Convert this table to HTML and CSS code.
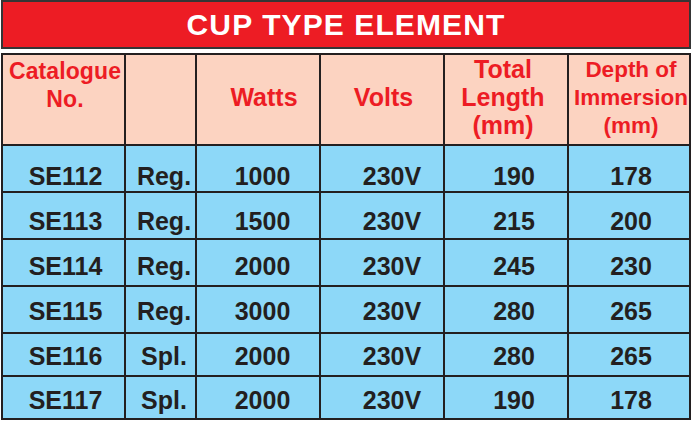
FILE: index.html
```html
<!DOCTYPE html>
<html lang="en">
<head>
<meta charset="utf-8">
<title>Cup Type Element</title>
<link rel="stylesheet" href="styles.css">
</head>
<body>
<div class="page">
  <h1 class="title">CUP TYPE ELEMENT</h1>
  <div class="table">
    <div class="row head">
      <div class="cell c1"><span class="narrow1">Catalogue<br>No.</span></div>
      <div class="cell c2"></div>
      <div class="cell c3 low">Watts</div>
      <div class="cell c4 low">Volts</div>
      <div class="cell c5">Total<br>Length<br>(mm)</div>
      <div class="cell c6"><span class="narrow6">Depth of<br>Immersion<br>(mm)</span></div>
    </div>
    <div class="row data r1">
      <div class="cell c1">SE112</div><div class="cell c2">Reg.</div><div class="cell c3">1000</div><div class="cell c4">230V</div><div class="cell c5">190</div><div class="cell c6">178</div>
    </div>
    <div class="row data r2">
      <div class="cell c1">SE113</div><div class="cell c2">Reg.</div><div class="cell c3">1500</div><div class="cell c4">230V</div><div class="cell c5">215</div><div class="cell c6">200</div>
    </div>
    <div class="row data r3">
      <div class="cell c1">SE114</div><div class="cell c2">Reg.</div><div class="cell c3">2000</div><div class="cell c4">230V</div><div class="cell c5">245</div><div class="cell c6">230</div>
    </div>
    <div class="row data r4">
      <div class="cell c1">SE115</div><div class="cell c2">Reg.</div><div class="cell c3">3000</div><div class="cell c4">230V</div><div class="cell c5">280</div><div class="cell c6">265</div>
    </div>
    <div class="row data r5">
      <div class="cell c1">SE116</div><div class="cell c2">Spl.</div><div class="cell c3">2000</div><div class="cell c4">230V</div><div class="cell c5">280</div><div class="cell c6">265</div>
    </div>
    <div class="row data r6">
      <div class="cell c1">SE117</div><div class="cell c2">Spl.</div><div class="cell c3">2000</div><div class="cell c4">230V</div><div class="cell c5">190</div><div class="cell c6">178</div>
    </div>
  </div>
</div>
</body>
</html>
```

FILE: styles.css
```css
html, body {
  margin: 0;
  padding: 0;
  background: #ffffff;
}

.page {
  width: 690px;
  margin-left: 1px;
  font-family: "Liberation Sans", Arial, sans-serif;
  font-weight: bold;
}

.title {
  box-sizing: border-box;
  height: 49px;
  margin: 0;
  background: #ed1c24;
  border: 2px solid #353535;
  color: #ffffff;
  font-size: 30px;
  line-height: 45px;
  letter-spacing: 1.1px;
  text-align: center;
}

.table {
  margin-top: 4px;
  display: grid;
  grid-template-columns: 121px 69px 122px 122px 122px 120px;
  grid-template-rows: 89px 45px 45px 45px 45px 41px 41px;
  gap: 2px;
  padding: 2px;
  background: #231f20;
}

.row {
  display: contents;
}

.cell {
  text-align: center;
  white-space: nowrap;
  overflow: hidden;
}

.head .cell {
  background: #fcd3c1;
  color: #ed1c24;
  font-size: 25px;
  line-height: 28px;
  padding-top: 0;
}

.head .c1 { font-size: 23px; padding-top: 2px; padding-left: 3px; }
.head .c3 { padding-left: 12px; }
.head .c4 { padding-left: 3px; }
.head .c5 { padding-right: 6px; }
.head .c6 { font-size: 22.5px; padding-top: 1px; padding-left: 4px; }
.head .low { padding-top: 28px; }

.narrow1 { letter-spacing: 0.1px; }
.narrow6 { letter-spacing: 0; }

.data .cell {
  background: #8dd8f8;
  color: #231f20;
  font-size: 25px;
  line-height: 28px;
}

.data .c1 { padding-left: 4px; }
.data .c2 { padding-left: 7px; }
.data .c3 { padding-left: 9px; }
.data .c4 { padding-left: 20px; }
.data .c5 { padding-left: 16px; }
.data .c6 { padding-left: 4px; }

.r1 .cell { padding-top: 16px; }
.r2 .cell { padding-top: 14px; }
.r3 .cell { padding-top: 12px; }
.r4 .cell { padding-top: 10px; }
.r5 .cell { padding-top: 8px; }
.r6 .cell { padding-top: 9px; }
```
